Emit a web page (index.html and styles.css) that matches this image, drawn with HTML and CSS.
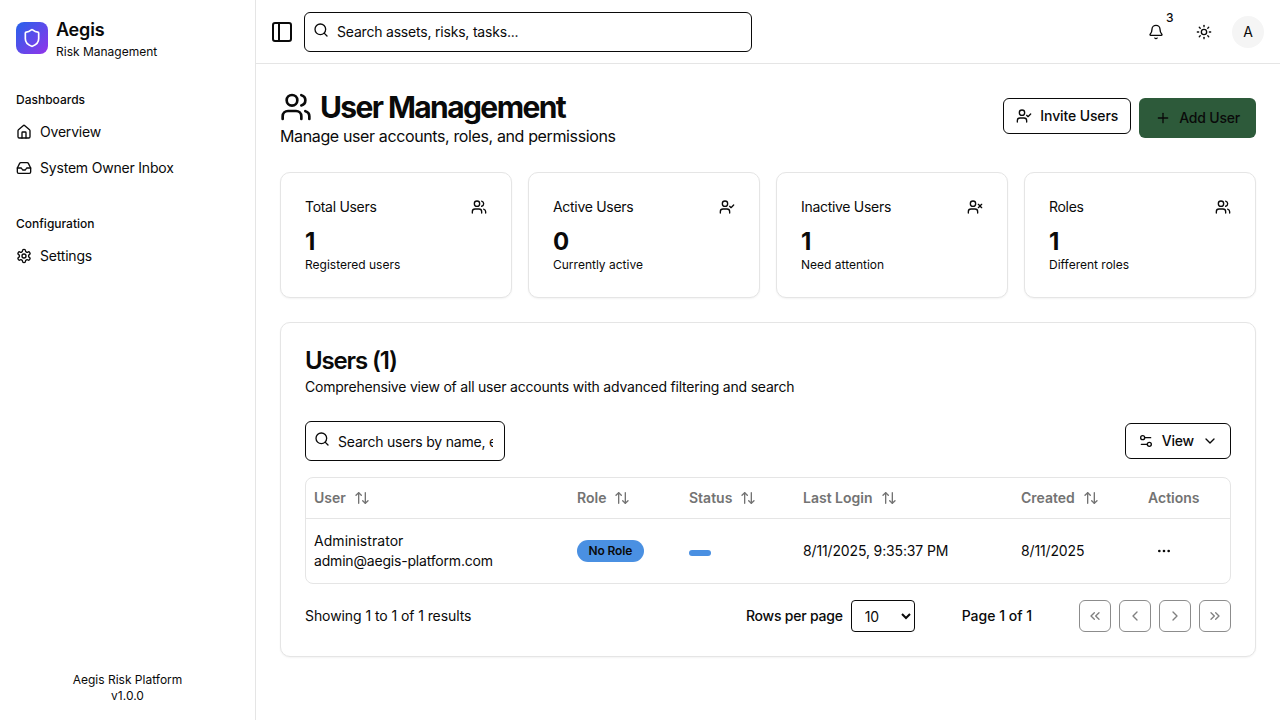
FILE: index.html
```html
<!DOCTYPE html>
<html lang="en">
<head>
    <meta charset="UTF-8">
    <meta name="viewport" content="width=device-width, initial-scale=1.0">
    <title>User Management</title>
    <link rel="stylesheet" href="styles.css">
</head>
<body>
    <svg class="defs" width="0" height="0">
        <symbol id="users" viewBox="0 0 24 24"><path d="M16 21v-2a4 4 0 0 0-4-4H6a4 4 0 0 0-4 4v2"/><circle cx="9" cy="7" r="4"/><path d="M22 21v-2a4 4 0 0 0-3-3.87"/><path d="M16 3.13a4 4 0 0 1 0 7.75"/></symbol>
        <symbol id="user-check" viewBox="0 0 24 24"><path d="M16 21v-2a4 4 0 0 0-4-4H6a4 4 0 0 0-4 4v2"/><circle cx="9" cy="7" r="4"/><polyline points="16 11 18 13 22 9"/></symbol>
        <symbol id="user-x" viewBox="0 0 24 24"><path d="M16 21v-2a4 4 0 0 0-4-4H6a4 4 0 0 0-4 4v2"/><circle cx="9" cy="7" r="4"/><line x1="17" y1="8" x2="22" y2="13"/><line x1="22" y1="8" x2="17" y2="13"/></symbol>
        <symbol id="search" viewBox="0 0 24 24"><circle cx="11" cy="11" r="8"/><path d="m21 21-4.3-4.3"/></symbol>
        <symbol id="sort" viewBox="0 0 24 24"><path d="m21 16-4 4-4-4"/><path d="M17 20V4"/><path d="m3 8 4-4 4 4"/><path d="M7 4v16"/></symbol>
    </svg>

    <div class="app">
        <aside class="sidebar">
            <div class="brand">
                <div class="brand-logo">
                    <svg class="icon" viewBox="0 0 24 24"><path d="M20 13c0 5-3.5 7.5-7.66 8.95a1 1 0 0 1-.67-.01C7.5 20.5 4 18 4 13V6a1 1 0 0 1 1-1c2 0 4.5-1.2 6.24-2.72a1.17 1.17 0 0 1 1.52 0C14.51 3.81 17 5 19 5a1 1 0 0 1 1 1z"/></svg>
                </div>
                <div>
                    <div class="brand-name">Aegis</div>
                    <div class="brand-sub">Risk Management</div>
                </div>
            </div>

            <div class="nav-group">
                <div class="nav-label">Dashboards</div>
                <a class="nav-item">
                    <svg class="icon" viewBox="0 0 24 24"><path d="M15 21v-8a1 1 0 0 0-1-1h-4a1 1 0 0 0-1 1v8"/><path d="M3 10a2 2 0 0 1 .709-1.528l7-5.999a2 2 0 0 1 2.582 0l7 5.999A2 2 0 0 1 21 10v9a2 2 0 0 1-2 2H5a2 2 0 0 1-2-2z"/></svg>
                    Overview
                </a>
                <a class="nav-item">
                    <svg class="icon" viewBox="0 0 24 24"><polyline points="22 12 16 12 14 15 10 15 8 12 2 12"/><path d="M5.45 5.11 2 12v6a2 2 0 0 0 2 2h16a2 2 0 0 0 2-2v-6l-3.45-6.89A2 2 0 0 0 16.76 4H7.24a2 2 0 0 0-1.79 1.11z"/></svg>
                    System Owner Inbox
                </a>
            </div>

            <div class="nav-group">
                <div class="nav-label">Configuration</div>
                <a class="nav-item">
                    <svg class="icon" viewBox="0 0 24 24"><path d="M12.22 2h-.44a2 2 0 0 0-2 2v.18a2 2 0 0 1-1 1.73l-.43.25a2 2 0 0 1-2 0l-.15-.08a2 2 0 0 0-2.73.73l-.22.38a2 2 0 0 0 .73 2.73l.15.1a2 2 0 0 1 1 1.72v.51a2 2 0 0 1-1 1.74l-.15.09a2 2 0 0 0-.73 2.73l.22.38a2 2 0 0 0 2.73.73l.15-.08a2 2 0 0 1 2 0l.43.25a2 2 0 0 1 1 1.73V20a2 2 0 0 0 2 2h.44a2 2 0 0 0 2-2v-.18a2 2 0 0 1 1-1.73l.43-.25a2 2 0 0 1 2 0l.15.08a2 2 0 0 0 2.73-.73l.22-.39a2 2 0 0 0-.73-2.73l-.15-.08a2 2 0 0 1-1-1.74v-.5a2 2 0 0 1 1-1.74l.15-.09a2 2 0 0 0 .73-2.73l-.22-.38a2 2 0 0 0-2.73-.73l-.15.08a2 2 0 0 1-2 0l-.43-.25a2 2 0 0 1-1-1.73V4a2 2 0 0 0-2-2z"/><circle cx="12" cy="12" r="3"/></svg>
                    Settings
                </a>
            </div>

            <div class="sidebar-foot">
                <div>Aegis Risk Platform</div>
                <div>v1.0.0</div>
            </div>
        </aside>

        <div class="content">
            <header class="topbar">
                <svg class="icon toggle" viewBox="0 0 24 24"><rect width="18" height="18" x="3" y="3" rx="2"/><path d="M9 3v18"/></svg>
                <div class="search-box top-search">
                    <svg class="icon"><use href="#search"/></svg>
                    <input type="text" placeholder="Search assets, risks, tasks...">
                </div>
                <div class="top-actions">
                    <div class="bell">
                        <svg class="icon" viewBox="0 0 24 24"><path d="M10.268 21a2 2 0 0 0 3.464 0"/><path d="M3.262 15.326A1 1 0 0 0 4 17h16a1 1 0 0 0 .74-1.673C19.41 13.956 18 12.499 18 8A6 6 0 0 0 6 8c0 4.499-1.411 5.956-2.738 7.326"/></svg>
                        <span class="bell-count">3</span>
                    </div>
                    <svg class="icon sun" viewBox="0 0 24 24"><circle cx="12" cy="12" r="4"/><path d="M12 2v2"/><path d="M12 20v2"/><path d="m4.93 4.93 1.41 1.41"/><path d="m17.66 17.66 1.41 1.41"/><path d="M2 12h2"/><path d="M20 12h2"/><path d="m6.34 17.66-1.41 1.41"/><path d="m19.07 4.93-1.41 1.41"/></svg>
                    <div class="avatar">A</div>
                </div>
            </header>

            <main class="main">
                <div class="page-head">
                    <div>
                        <h1><svg class="icon"><use href="#users"/></svg>User Management</h1>
                        <p class="page-sub">Manage user accounts, roles, and permissions</p>
                    </div>
                    <div class="page-actions">
                        <button class="btn btn-outline btn-invite"><svg class="icon"><use href="#user-check"/></svg>Invite Users</button>
                        <button class="btn btn-green"><svg class="icon" viewBox="0 0 24 24"><path d="M5 12h14"/><path d="M12 5v14"/></svg>Add User</button>
                    </div>
                </div>

                <div class="stats">
                    <div class="card stat">
                        <div class="stat-top"><span>Total Users</span><svg class="icon"><use href="#users"/></svg></div>
                        <div class="stat-num">1</div>
                        <div class="stat-note">Registered users</div>
                    </div>
                    <div class="card stat">
                        <div class="stat-top"><span>Active Users</span><svg class="icon"><use href="#user-check"/></svg></div>
                        <div class="stat-num">0</div>
                        <div class="stat-note">Currently active</div>
                    </div>
                    <div class="card stat">
                        <div class="stat-top"><span>Inactive Users</span><svg class="icon"><use href="#user-x"/></svg></div>
                        <div class="stat-num">1</div>
                        <div class="stat-note">Need attention</div>
                    </div>
                    <div class="card stat">
                        <div class="stat-top"><span>Roles</span><svg class="icon"><use href="#users"/></svg></div>
                        <div class="stat-num">1</div>
                        <div class="stat-note">Different roles</div>
                    </div>
                </div>

                <section class="card panel">
                    <h2>Users (1)</h2>
                    <p class="panel-sub">Comprehensive view of all user accounts with advanced filtering and search</p>

                    <div class="toolbar">
                        <div class="search-box user-search">
                            <svg class="icon"><use href="#search"/></svg>
                            <input type="text" placeholder="Search users by name, email, or role...">
                        </div>
                        <button class="btn btn-outline">
                            <svg class="icon" viewBox="0 0 24 24"><path d="M14 17H5"/><path d="M19 7h-9"/><circle cx="17" cy="17" r="3"/><circle cx="7" cy="7" r="3"/></svg>
                            View
                            <svg class="icon" viewBox="0 0 24 24"><path d="m6 9 6 6 6-6"/></svg>
                        </button>
                    </div>

                    <div class="table-wrap">
                        <table>
                            <thead>
                                <tr>
                                    <th class="col-user">User<svg class="icon"><use href="#sort"/></svg></th>
                                    <th class="col-role">Role<svg class="icon"><use href="#sort"/></svg></th>
                                    <th class="col-status">Status<svg class="icon"><use href="#sort"/></svg></th>
                                    <th class="col-login">Last Login<svg class="icon"><use href="#sort"/></svg></th>
                                    <th class="col-created">Created<svg class="icon"><use href="#sort"/></svg></th>
                                    <th>Actions</th>
                                </tr>
                            </thead>
                            <tbody>
                                <tr>
                                    <td>
                                        <div class="user-name">Administrator</div>
                                        <div>admin@aegis-platform.com</div>
                                    </td>
                                    <td><span class="badge">No Role</span></td>
                                    <td><span class="status-bar"></span></td>
                                    <td class="num-cell">8/11/2025, 9:35:37 PM</td>
                                    <td class="num-cell">8/11/2025</td>
                                    <td>
                                        <svg class="icon dots" viewBox="0 0 24 24"><circle cx="12" cy="12" r="1"/><circle cx="19" cy="12" r="1"/><circle cx="5" cy="12" r="1"/></svg>
                                    </td>
                                </tr>
                            </tbody>
                        </table>
                    </div>

                    <div class="pager">
                        <span class="pager-count">Showing 1 to 1 of 1 results</span>
                        <div class="pager-right">
                            <div class="rows">
                                <span>Rows per page</span>
                                <select>
                                    <option>10</option>
                                    <option>20</option>
                                    <option>50</option>
                                </select>
                            </div>
                            <span class="page-of">Page 1 of 1</span>
                            <div class="page-btns">
                                <button><svg class="icon" viewBox="0 0 24 24"><path d="m11 17-5-5 5-5"/><path d="m18 17-5-5 5-5"/></svg></button>
                                <button><svg class="icon" viewBox="0 0 24 24"><path d="m15 18-6-6 6-6"/></svg></button>
                                <button><svg class="icon" viewBox="0 0 24 24"><path d="m9 18 6-6-6-6"/></svg></button>
                                <button><svg class="icon" viewBox="0 0 24 24"><path d="m6 17 5-5-5-5"/><path d="m13 17 5-5-5-5"/></svg></button>
                            </div>
                        </div>
                    </div>
                </section>
            </main>
        </div>
    </div>
</body>
</html>
```

FILE: styles.css
```css
* {
    box-sizing: border-box;
    margin: 0;
}
body {
    font-family: Inter, "Liberation Sans", sans-serif;
    font-size: 14px;
    line-height: 20px;
    letter-spacing: -0.2px;
    color: #0a0a0a;
    background: #fff;
    overflow: hidden;
}
.defs {
    position: absolute;
}
.icon {
    width: 16px;
    height: 16px;
    fill: none;
    stroke: currentColor;
    stroke-width: 2;
    stroke-linecap: round;
    stroke-linejoin: round;
    flex-shrink: 0;
}
.app {
    display: flex;
    height: 720px;
}

/* sidebar */
.sidebar {
    width: 256px;
    flex-shrink: 0;
    display: flex;
    flex-direction: column;
    border-right: 1px solid #e5e5e5;
    padding: 16px;
}
.brand {
    display: flex;
    align-items: center;
    gap: 8px;
    height: 44px;
    margin-bottom: 28px;
}
.brand-logo {
    width: 32px;
    height: 32px;
    border-radius: 8px;
    background: linear-gradient(135deg, #2563eb, #9333ea);
    display: flex;
    align-items: center;
    justify-content: center;
    color: #fff;
}
.brand-logo .icon {
    width: 20px;
    height: 20px;
}
.brand-name {
    font-size: 18px;
    line-height: 28px;
    font-weight: 600;
}
.brand-sub {
    font-size: 12px;
    line-height: 16px;
    letter-spacing: 0;
}
.nav-group {
    margin-bottom: 26px;
}
.nav-label {
    font-size: 12px;
    line-height: 16px;
    font-weight: 500;
    letter-spacing: 0;
    padding-bottom: 6px;
    padding-top: 4px;
}
.nav-item {
    display: flex;
    align-items: center;
    gap: 8px;
    height: 36px;
}
.sidebar-foot {
    margin-top: auto;
    text-align: center;
    font-size: 12px;
    line-height: 16px;
    letter-spacing: 0;
}

/* top bar */
.content {
    flex: 1;
    min-width: 0;
}
.topbar {
    height: 64px;
    display: flex;
    align-items: center;
    border-bottom: 1px solid #e5e5e5;
    padding: 1px 16px 0 14px;
}
.toggle {
    width: 24px;
    height: 24px;
    margin-right: 10px;
}
.search-box {
    display: flex;
    align-items: center;
    gap: 8px;
    height: 40px;
    border: 1px solid #0a0a0a;
    border-radius: 6px;
    padding: 0 8px;
}
.search-box input {
    flex: 1;
    min-width: 0;
    width: 100%;
    border: 0;
    outline: 0;
    padding: 0;
    font: inherit;
    letter-spacing: inherit;
    color: inherit;
}
.search-box input::placeholder {
    color: #0a0a0a;
    opacity: 1;
}
.search-box .icon {
    margin-top: -4px;
}
.top-search {
    width: 448px;
}
.top-actions {
    margin-left: auto;
    display: flex;
    align-items: center;
}
.bell {
    position: relative;
    width: 16px;
    height: 16px;
    margin-right: 32px;
}
.bell-count {
    position: absolute;
    top: -16px;
    left: 18px;
    font-size: 12px;
    font-weight: 500;
    letter-spacing: 0;
}
.sun {
    margin-right: 20px;
}
.avatar {
    width: 32px;
    height: 32px;
    border-radius: 50%;
    background: #f5f5f5;
    display: flex;
    align-items: center;
    justify-content: center;
    font-size: 14px;
}

/* page */
.main {
    padding: 24px;
}
.page-head {
    display: flex;
    justify-content: space-between;
    align-items: center;
    margin-bottom: 24px;
}
h1 {
    display: flex;
    align-items: center;
    gap: 8px;
    font-size: 30px;
    line-height: 36px;
    font-weight: 700;
    letter-spacing: -1.6px;
    margin-top: 1px;
}
h1 .icon {
    width: 32px;
    height: 32px;
}
.page-sub {
    font-size: 16px;
    line-height: 24px;
    letter-spacing: -0.375px;
    margin-top: -1px;
}
.page-actions {
    display: flex;
    align-items: flex-start;
    gap: 8px;
}
.btn {
    display: inline-flex;
    align-items: center;
    justify-content: center;
    gap: 8px;
    font: inherit;
    font-weight: 500;
    letter-spacing: inherit;
    color: inherit;
    border-radius: 6px;
    background: #fff;
}
.btn-outline {
    border: 1px solid #0a0a0a;
    height: 36px;
    padding: 0 12px;
}
.btn-invite {
    letter-spacing: -0.12px;
}
.btn-green {
    border: 0;
    background: #2d5a3a;
    height: 40px;
    padding: 0 16px;
}

.stats {
    display: grid;
    grid-template-columns: repeat(4, 1fr);
    gap: 16px;
    margin-bottom: 24px;
}
.card {
    border: 1px solid #e5e5e5;
    border-radius: 10px;
    box-shadow: 0 1px 2px rgba(0, 0, 0, 0.05);
    background: #fff;
}
.stat {
    height: 126px;
    padding: 24px;
}
.stat-top {
    display: flex;
    justify-content: space-between;
    align-items: center;
    letter-spacing: -0.3px;
    height: 20px;
    margin-bottom: 9px;
}
.stat-num {
    font-size: 24px;
    line-height: 32px;
    font-weight: 700;
    letter-spacing: 0;
    margin-bottom: -1px;
}
.stat-note {
    font-size: 12px;
    line-height: 16px;
    letter-spacing: 0;
}

/* users panel */
.panel {
    height: 335px;
    padding: 24px;
}
h2 {
    font-size: 24px;
    line-height: 28px;
    font-weight: 600;
    letter-spacing: -1.15px;
    margin-bottom: 2px;
}
.panel-sub {
    letter-spacing: -0.21px;
    margin-bottom: 24px;
}
.toolbar {
    display: flex;
    justify-content: space-between;
    align-items: center;
    margin-bottom: 16px;
}
.user-search {
    width: 200px;
    padding-right: 11px;
}
.user-search input {
    padding-top: 2px;
}
.table-wrap {
    border: 1px solid #e5e5e5;
    border-radius: 8px;
}
table {
    width: 100%;
    border-collapse: collapse;
    table-layout: fixed;
}
th {
    height: 40px;
    text-align: left;
    font-weight: 600;
    letter-spacing: 0;
    color: #737373;
    padding: 0 8px;
    border-bottom: 1px solid #e5e5e5;
}
th .icon {
    margin-left: 8px;
    vertical-align: -3px;
}
td {
    height: 65px;
    padding: 0 8px;
    letter-spacing: -0.19px;
}
.user-name {
    letter-spacing: 0.05px;
}
.num-cell {
    letter-spacing: -0.14px;
}
.col-user {
    width: 263px;
}
.col-role {
    width: 112px;
}
.col-status {
    width: 114px;
}
.col-login {
    width: 218px;
}
.col-created {
    width: 127px;
}
.badge {
    display: inline-block;
    background: #4a90e2;
    border-radius: 999px;
    font-size: 12px;
    line-height: 16px;
    font-weight: 600;
    letter-spacing: -0.15px;
    padding: 3px 11.5px;
}
.status-bar {
    display: block;
    width: 22px;
    height: 6px;
    margin-top: 4px;
    border-radius: 999px;
    background: #4a90e2;
}
.dots {
    display: block;
    margin-left: 8px;
}
.pager {
    display: flex;
    justify-content: space-between;
    align-items: center;
    margin-top: 16px;
}
.pager-count {
    letter-spacing: -0.08px;
}
.pager-right {
    display: flex;
    align-items: center;
}
.rows {
    display: flex;
    align-items: center;
    gap: 8px;
    font-weight: 500;
    letter-spacing: -0.23px;
}
select {
    width: 64px;
    height: 32px;
    border: 1px solid #0a0a0a;
    border-radius: 4px;
    background: #fff;
    font: inherit;
    font-weight: 400;
    color: inherit;
    padding-left: 9px;
}
.page-of {
    font-weight: 500;
    letter-spacing: 0;
    margin-left: 47px;
    margin-right: 47px;
}
.page-btns {
    display: flex;
    gap: 8px;
}
.page-btns button {
    width: 32px;
    height: 32px;
    padding: 0;
    display: flex;
    align-items: center;
    justify-content: center;
    background: #fff;
    color: #808080;
    border: 1px solid #8c8c8c;
    border-radius: 6px;
}
```
